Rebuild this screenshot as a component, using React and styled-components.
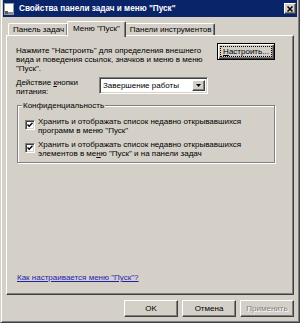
import React from "react";
import styled, { createGlobalStyle, css } from "styled-components";

const face = "#d4d0c8";

const GlobalStyle = createGlobalStyle`
  html, body {
    margin: 0;
    padding: 0;
    background: ${face};
  }
  body {
    font-family: "Liberation Sans", Arial, sans-serif;
    font-size: 8px;
    line-height: 9px;
    color: #000;
  }
`;

// raised 3d frame used by buttons, tabs and the close box
const raised = css`
  border: 1px solid;
  border-color: #fff #404040 #404040 #fff;
  box-shadow: inset -1px -1px 0 #808080;
`;

const sunken = css`
  border: 1px solid;
  border-color: #808080 #fff #fff #808080;
  box-shadow: inset 1px 1px 0 #404040, inset -1px -1px 0 ${face};
`;

const Window = styled.div`
  width: 300px;
  height: 323px;
  box-sizing: border-box;
  display: flex;
  flex-direction: column;
  background: ${face};
  border-left: 1px solid ${face};
  border-right: 1px solid #404040;
  border-bottom: 1px solid #404040;
  box-shadow: inset 1px 0 0 #fff, inset -1px -1px 0 #808080;
  padding: 0 2px 2px 2px;
`;

const TitleBar = styled.div`
  height: 17px;
  flex: none;
  display: flex;
  align-items: center;
  background: #0a246a;
  padding: 0 1px 0 1px;
`;

const TitleIcon = styled.svg`
  width: 11px;
  height: 12px;
  flex: none;
`;

const TitleText = styled.div`
  flex: 1;
  margin-left: 4px;
  color: #fff;
  font-weight: bold;
  font-size: 8.2px;
  white-space: nowrap;
`;

const CloseBox = styled.div`
  ${raised};
  width: 10px;
  height: 9px;
  background: ${face};
  display: flex;
  align-items: center;
  justify-content: center;
`;

const Body = styled.div`
  flex: 1;
  display: flex;
  flex-direction: column;
  padding: 0 3px;
`;

const TabRow = styled.div`
  display: flex;
  align-items: flex-end;
  height: 14px;
  margin-top: 4px;
  padding-left: 2px;
  position: relative;
  z-index: 1;
`;

const Tab = styled.div`
  border: 1px solid;
  border-bottom: none;
  border-color: #fff #404040 #404040 #fff;
  box-shadow: inset -1px 0 0 #808080;
  border-radius: 2px 2px 0 0;
  background: ${face};
  white-space: nowrap;
  box-sizing: border-box;
  display: flex;
  align-items: center;
  height: ${(p) => (p.$active ? "16px" : "12px")};
  padding: ${(p) => (p.$active ? "0 5px 2px 5px" : "0 3px 0 4px")};
  margin: ${(p) => (p.$active ? "0 -1px -2px -1px" : "0")};
  position: relative;
  z-index: ${(p) => (p.$active ? 2 : 1)};
`;

const Panel = styled.div`
  flex: 1;
  display: flex;
  flex-direction: column;
  border: 1px solid;
  border-color: #fff #404040 #404040 #fff;
  box-shadow: inset -1px -1px 0 #808080;
  padding: 7px 18px 12px 9px;
`;

const TopRow = styled.div`
  display: flex;
  justify-content: space-between;
  align-items: flex-start;
`;

const Description = styled.div`
  padding-top: 3px;
  white-space: nowrap;
`;

const Button = styled.div`
  ${raised};
  box-sizing: border-box;
  width: ${(p) => p.$width || 54}px;
  height: 17px;
  background: ${face};
  display: flex;
  align-items: center;
  justify-content: center;
  color: ${(p) => (p.$disabled ? "#808080" : "#000")};
  text-shadow: ${(p) => (p.$disabled ? "1px 1px 0 #fff" : "none")};
  ${(p) =>
    p.$focused &&
    css`
      border-color: #000;
      box-shadow: inset 1px 1px 0 #fff, inset -1px -1px 0 #404040,
        inset -2px -2px 0 #808080;
    `}
`;

const FocusRing = styled.span`
  border: 1px dotted #000;
  padding: 0 2px;
  line-height: 9px;
`;

const Key = styled.span`
  text-decoration: underline;
`;

const PowerRow = styled.div`
  display: flex;
  align-items: flex-start;
  margin-top: 5px;
`;

const PowerLabel = styled.div`
  width: 83px;
`;

const Select = styled.div`
  ${sunken};
  box-sizing: border-box;
  width: 109px;
  height: 17px;
  background: #fff;
  display: flex;
  align-items: stretch;
  padding: 2px;
  margin-top: -1px;
`;

const SelectValue = styled.div`
  flex: 1;
  display: flex;
  align-items: center;
  padding-left: 1px;
  white-space: nowrap;
`;

const SelectArrow = styled.div`
  ${raised};
  width: 11px;
  background: ${face};
  display: flex;
  align-items: center;
  justify-content: center;
`;

const Group = styled.fieldset`
  margin: 5px 0 0 1px;
  padding: 7px 6px 4px 7px;
  border: 1px solid #808080;
  box-shadow: 1px 1px 0 #fff, inset 1px 1px 0 #fff;
  display: flex;
  flex-direction: column;
  gap: 5px;
`;

const Legend = styled.legend`
  padding: 0 1px;
  margin-left: -3px;
  background: ${face};
  line-height: 9px;
`;

const CheckRow = styled.div`
  display: flex;
  align-items: flex-start;
`;

const CheckBox = styled.div`
  ${sunken};
  box-sizing: border-box;
  flex: none;
  width: 10px;
  height: 10px;
  margin-top: 3px;
  margin-right: 3px;
  background: #fff;
  display: flex;
  align-items: center;
  justify-content: center;
`;

const CheckText = styled.div`
  white-space: nowrap;
`;

const HelpLink = styled.a`
  margin-top: auto;
  margin-left: 1px;
  color: #1f1fb0;
  text-decoration: underline;
  cursor: pointer;
`;

const ButtonRow = styled.div`
  display: flex;
  justify-content: flex-end;
  gap: 4px;
  padding: 5px 0 3px;
`;

function Check() {
  return (
    <CheckBox>
      <svg width="6" height="6" viewBox="0 0 6 6">
        <path d="M0.5 2.5 L2.2 4.2 L5.5 0.8" stroke="#000" strokeWidth="1.4" fill="none" />
      </svg>
    </CheckBox>
  );
}

export default function App() {
  return (
    <>
      <GlobalStyle />
      <Window>
        <TitleBar>
          <TitleIcon viewBox="0 0 11 12">
            <rect x="0.5" y="0.5" width="9" height="11" fill="#fff" stroke="#9a9a9a" />
            <rect x="1" y="8" width="3" height="3" fill="#5a5a5a" />
            <rect x="4" y="9" width="5" height="2" fill="#8a8a8a" />
          </TitleIcon>
          <TitleText>Свойства панели задач и меню "Пуск"</TitleText>
          <CloseBox>
            <svg width="6" height="6" viewBox="0 0 6 6">
              <path d="M0.5 0.5 L5.5 5.5 M5.5 0.5 L0.5 5.5" stroke="#000" strokeWidth="1.5" />
            </svg>
          </CloseBox>
        </TitleBar>
        <Body>
          <TabRow>
            <Tab>Панель задач</Tab>
            <Tab $active>Меню "Пуск"</Tab>
            <Tab>Панели инструментов</Tab>
          </TabRow>
          <Panel>
            <TopRow>
              <Description>
                Нажмите "Настроить" для определения внешнего
                <br />
                вида и поведения ссылок, значков и меню в меню
                <br />
                "Пуск".
              </Description>
              <Button $width={58} $focused>
                <FocusRing>
                  <Key>Н</Key>астроить...
                </FocusRing>
              </Button>
            </TopRow>
            <PowerRow>
              <PowerLabel>
                Действие <Key>к</Key>нопки
                <br />
                питания:
              </PowerLabel>
              <Select>
                <SelectValue>Завершение работы</SelectValue>
                <SelectArrow>
                  <svg width="5" height="3" viewBox="0 0 5 3">
                    <path d="M0 0 H5 L2.5 3 Z" fill="#000" />
                  </svg>
                </SelectArrow>
              </Select>
            </PowerRow>
            <Group>
              <Legend>Конфиденциальность</Legend>
              <CheckRow>
                <Check />
                <CheckText>
                  Хранить и отображать список недавно открывавшихся
                  <br />
                  программ в меню "Пуск"
                </CheckText>
              </CheckRow>
              <CheckRow>
                <Check />
                <CheckText>
                  Хранить и отображать список недавно открывавшихся
                  <br />
                  элементов в ме<Key>н</Key>ю "Пуск" и на панели задач
                </CheckText>
              </CheckRow>
            </Group>
            <HelpLink>Как настраивается меню "Пуск"?</HelpLink>
          </Panel>
          <ButtonRow>
            <Button>OK</Button>
            <Button>Отмена</Button>
            <Button $disabled>Применить</Button>
          </ButtonRow>
        </Body>
      </Window>
    </>
  );
}
